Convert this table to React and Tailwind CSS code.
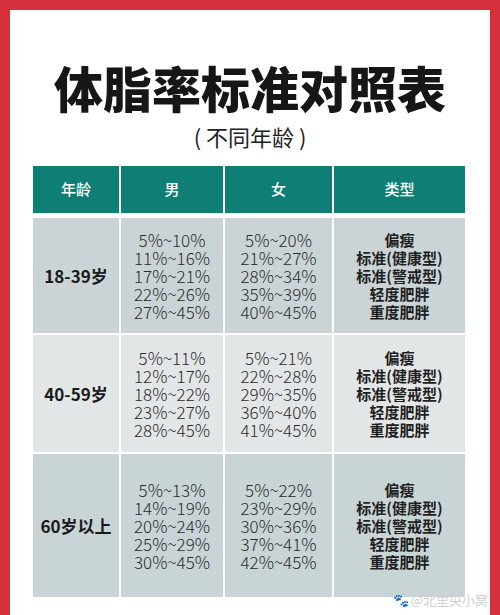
import React from "react";

const rows = [
  {
    age: "18-39岁",
    male: ["5%~10%", "11%~16%", "17%~21%", "22%~26%", "27%~45%"],
    female: ["5%~20%", "21%~27%", "28%~34%", "35%~39%", "40%~45%"],
    bg: "bg-[#cad4d7]",
    height: "h-[115px]",
  },
  {
    age: "40-59岁",
    male: ["5%~11%", "12%~17%", "18%~22%", "23%~27%", "28%~45%"],
    female: ["5%~21%", "22%~28%", "29%~35%", "36%~40%", "41%~45%"],
    bg: "bg-[#e3e6e7]",
    height: "h-[117px]",
  },
  {
    age: "60岁以上",
    male: ["5%~13%", "14%~19%", "20%~24%", "25%~29%", "30%~45%"],
    female: ["5%~22%", "23%~29%", "30%~36%", "37%~41%", "42%~45%"],
    bg: "bg-[#c9d4d7]",
    height: "h-[143px]",
  },
];

const types = ["偏瘦", "标准(健康型)", "标准(警戒型)", "轻度肥胖", "重度肥胖"];

const cols = "grid grid-cols-[86px_102px_107px_131px] gap-x-[2px]";

const App = () => {
  return (
    <div
      className="relative w-[500px] h-[615px] bg-[#d4313d] pt-[10px] px-[10px] overflow-hidden"
      style={{ fontFamily: '"Noto Sans CJK SC", "Noto Sans", sans-serif' }}
    >
      <div className="h-full bg-white flex flex-col">
        <h1 className="mt-[52px] text-center text-[49px] leading-[50px] font-black text-[#161616] tracking-[0px]">
          体脂率标准对照表
        </h1>
        <p className="mt-[10px] text-center text-[22px] leading-[28px] text-[#222]">
          ( 不同年龄 )
        </p>

        <div className="ml-[23px] mt-[16px] w-[432px]">
          <div className={`${cols} h-[47px] mb-[5px]`}>
            {["年龄", "男", "女", "类型"].map((h) => (
              <div
                key={h}
                className="bg-[#0f7e75] text-white text-[15px] font-medium flex items-center justify-center"
              >
                {h}
              </div>
            ))}
          </div>

          <div className="flex flex-col gap-y-[2px]">
            {rows.map((r) => (
              <div key={r.age} className={`${cols} ${r.height}`}>
                <div className={`${r.bg} flex items-center justify-center text-[17px] font-bold text-[#1a1a1a]`}>
                  {r.age}
                </div>
                <div className={`${r.bg} flex flex-col items-center justify-center text-[17px] leading-[18px] font-light text-[#2a2a2a]`}>
                  {r.male.map((v) => (
                    <span key={v}>{v}</span>
                  ))}
                </div>
                <div className={`${r.bg} flex flex-col items-center justify-center text-[17px] leading-[18px] font-light text-[#2a2a2a]`}>
                  {r.female.map((v) => (
                    <span key={v}>{v}</span>
                  ))}
                </div>
                <div className={`${r.bg} flex flex-col items-center justify-center text-[15px] leading-[18px] font-bold text-[#1f1f1f]`}>
                  {types.map((t) => (
                    <span key={t}>{t}</span>
                  ))}
                </div>
              </div>
            ))}
          </div>
        </div>
      </div>

      <div className="absolute right-[12px] bottom-[6px] flex items-center gap-[2px] text-[13px] text-[#cfcfcf]">
        <span>🐾</span>
        <span>@北里央小窝</span>
      </div>
    </div>
  );
};

export default App;
